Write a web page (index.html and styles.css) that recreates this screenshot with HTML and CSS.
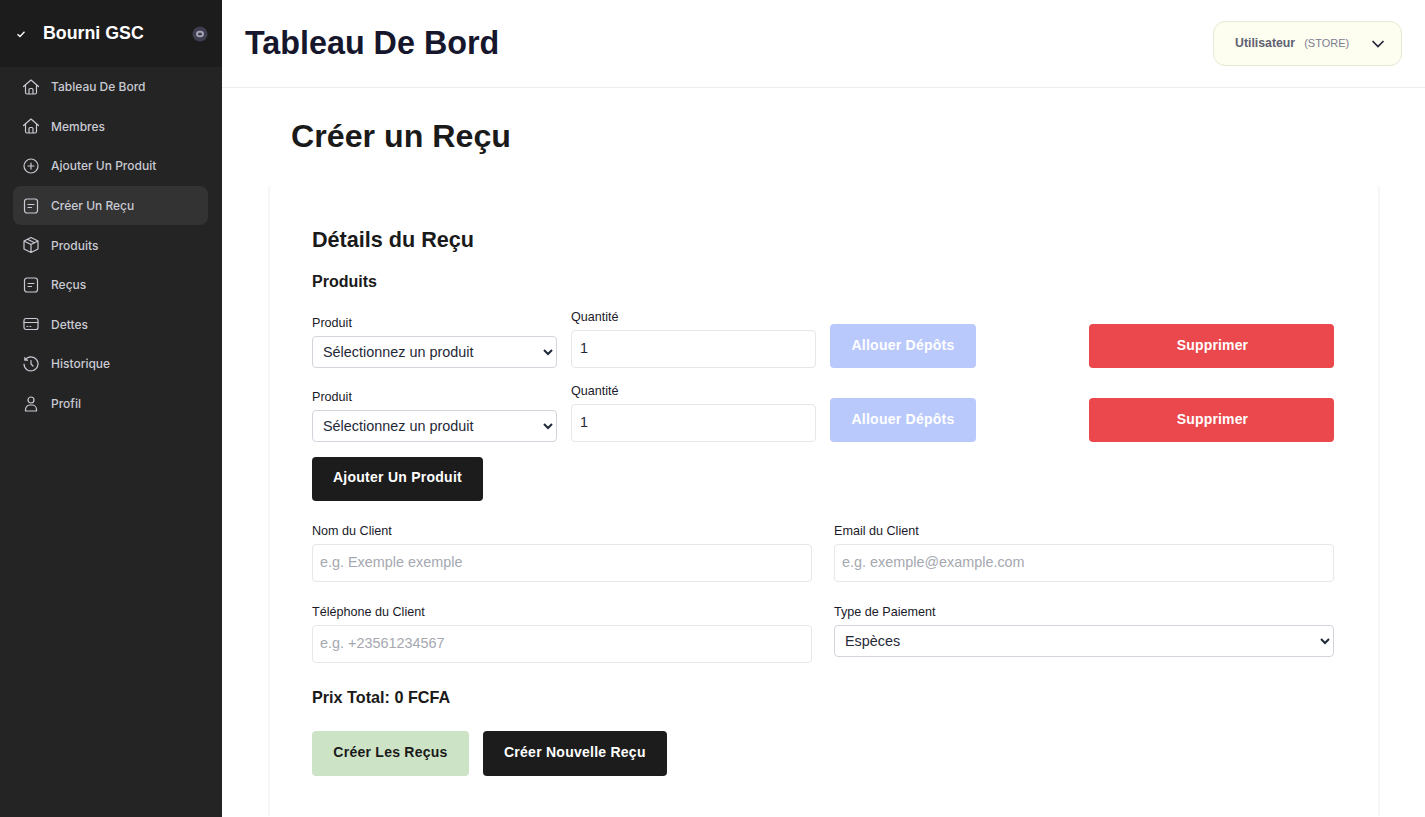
FILE: index.html
```html
<!DOCTYPE html>
<html lang="fr">
<head>
<meta charset="utf-8">
<title>Tableau De Bord</title>
<link rel="stylesheet" href="styles.css">
</head>
<body>
<div class="app">
  <aside class="sidebar">
    <div class="brand">
      <svg class="brand-check" viewBox="0 0 10 10"><path d="M1.500 5.200 4 7.500 8.500 2.800"/></svg>
      <span class="brand-name">Bourni GSC</span>
      <svg class="brand-eye" viewBox="0 0 16 16"><circle class="eye-bg" cx="8" cy="8" r="7.500"/><ellipse class="eye-ring" cx="8" cy="8" rx="3" ry="2.400"/></svg>
    </div>
    <nav class="nav">
      <a class="nav-item"><svg class="ico" viewBox="0 0 18 18"><path d="M1.500 8.500 9 2l7.500 6.500M3.500 7v7.500a1.500 1.500 0 0 0 1.500 1.500h8a1.500 1.500 0 0 0 1.500-1.500V7M7 16v-4.500a1 1 0 0 1 1-1h2a1 1 0 0 1 1 1V16"/></svg><span>Tableau De Bord</span></a>
      <a class="nav-item"><svg class="ico" viewBox="0 0 18 18"><path d="M1.500 8.500 9 2l7.500 6.500M3.500 7v7.500a1.500 1.500 0 0 0 1.500 1.500h8a1.500 1.500 0 0 0 1.500-1.500V7M7 16v-4.500a1 1 0 0 1 1-1h2a1 1 0 0 1 1 1V16"/></svg><span>Membres</span></a>
      <a class="nav-item"><svg class="ico" viewBox="0 0 18 18"><circle cx="9" cy="9" r="7"/><path d="M9 6v6M6 9h6"/></svg><span>Ajouter Un Produit</span></a>
      <a class="nav-item active"><svg class="ico" viewBox="0 0 18 18"><rect x="2.500" y="2" width="13" height="14" rx="2.500"/><path d="M6 7.500h6M6 10.500h3.500"/></svg><span>Créer Un Reçu</span></a>
      <a class="nav-item"><svg class="ico" viewBox="0 0 18 18"><path d="M9 1.500 2 5v8l7 3.500 7-3.500V5zM2 5l7 3.500L16 5M9 8.500v8M5.500 3.200l7 3.600"/></svg><span>Produits</span></a>
      <a class="nav-item"><svg class="ico" viewBox="0 0 18 18"><rect x="2.500" y="2" width="13" height="14" rx="2.500"/><path d="M6 7.500h6M6 10.500h3.500"/></svg><span>Reçus</span></a>
      <a class="nav-item"><svg class="ico" viewBox="0 0 18 18"><rect x="2" y="3.500" width="14" height="11" rx="2"/><path d="M2 7.500h14M5 11.500h.8M8 11.500h.8"/></svg><span>Dettes</span></a>
      <a class="nav-item"><svg class="ico" viewBox="0 0 18 18"><path d="M3.200 5A7 7 0 1 1 2 9M2.800 2.500V5.200h2.700M9 5.500V9l2 2"/></svg><span>Historique</span></a>
      <a class="nav-item"><svg class="ico" viewBox="0 0 18 18"><circle cx="9" cy="5" r="3"/><path d="M3.500 16v-1.500a4.500 4.500 0 0 1 4.500-4.500h2a4.500 4.500 0 0 1 4.500 4.500V16z"/></svg><span>Profil</span></a>
    </nav>
  </aside>
  <div class="main">
    <header class="topbar">
      <h1 class="page-title">Tableau De Bord</h1>
      <div class="user-chip">
        <span class="user-name">Utilisateur</span>
        <span class="user-role">(STORE)</span>
        <svg class="chev" viewBox="0 0 14 8"><path d="M1.500 1 7 6.500 12.500 1"/></svg>
      </div>
    </header>
    <main class="content">
      <h2 class="heading">Créer un Reçu</h2>
      <section class="card">
        <h3 class="card-title">Détails du Reçu</h3>
        <h4 class="sub-title">Produits</h4>
        <div class="line">
          <div class="field"><label class="label">Produit</label><select class="select"><option>Sélectionnez un produit</option></select></div>
          <div class="field"><label class="label">Quantité</label><input class="input qty" value="1"></div>
          <div class="field"><button class="btn btn-blue">Allouer Dépôts</button></div>
          <div class="field"><button class="btn btn-red">Supprimer</button></div>
        </div>
        <div class="line">
          <div class="field"><label class="label">Produit</label><select class="select"><option>Sélectionnez un produit</option></select></div>
          <div class="field"><label class="label">Quantité</label><input class="input qty" value="1"></div>
          <div class="field"><button class="btn btn-blue">Allouer Dépôts</button></div>
          <div class="field"><button class="btn btn-red">Supprimer</button></div>
        </div>
        <button class="btn btn-dark btn-add">Ajouter Un Produit</button>
        <div class="client-grid">
          <div class="field"><label class="label">Nom du Client</label><input class="input" placeholder="e.g. Exemple exemple"></div>
          <div class="field"><label class="label">Email du Client</label><input class="input" placeholder="e.g. exemple@example.com"></div>
          <div class="field"><label class="label">Téléphone du Client</label><input class="input" placeholder="e.g. +23561234567"></div>
          <div class="field"><label class="label">Type de Paiement</label><select class="select"><option>Espèces</option></select></div>
        </div>
        <p class="total">Prix Total: 0 FCFA</p>
        <div class="actions">
          <button class="btn btn-green">Créer Les Reçus</button>
          <button class="btn btn-dark">Créer Nouvelle Reçu</button>
        </div>
      </section>
    </main>
  </div>
</div>
</body>
</html>
```
FILE: styles.css
```css
* { box-sizing: border-box; }
html, body { margin: 0; height: 100%; overflow: hidden; }
body { font-family: "Liberation Sans", Arial, sans-serif; color: #1a1a1a; background: #fff; }
.app { display: flex; height: 817px; }

.sidebar { width: 222px; flex: none; background: #242424; }
.brand { height: 67px; background: #1c1c1c; display: flex; align-items: center; padding: 0 14px 0 16px; }
.brand-check { width: 10px; height: 10px; fill: none; stroke: #fff; stroke-width: 1.300; margin-right: 17px; }
.brand-name { flex: 1; color: #fff; font-weight: 700; font-size: 17.800px; }
.brand-eye { width: 16px; height: 16px; fill: none; }
.eye-bg { fill: #3f3d50; }
.eye-ring { stroke: #a9a9b8; stroke-width: 1.800; }
.nav { display: flex; flex-direction: column; padding: 0 14px 0 13px; }
.nav-item { display: flex; align-items: center; gap: 11px; height: 39.600px; padding-left: 9px; border-radius: 8px; color: #c9cad3; font-family: Inter, sans-serif; font-size: 12px; font-weight: 500; }
.nav-item.active { background: #333333; }
.ico { width: 18px; height: 18px; flex: none; fill: none; stroke: #c9cad3; stroke-width: 1.200; stroke-linecap: round; stroke-linejoin: round; }

.main { flex: 1; min-width: 0; }
.topbar { height: 88px; border-bottom: 1px solid #ececec; display: flex; align-items: center; justify-content: space-between; padding: 0 23px; }
.page-title { margin: 0; font-size: 32.300px; font-weight: 700; color: #16162c; }
.user-chip { width: 189px; height: 45px; display: flex; align-items: center; background: #fdfdf0; border: 1px solid #e8e8d6; border-radius: 12px; padding: 0 16px 0 21px; }
.user-name { font-size: 12.300px; font-weight: 700; color: #5f6170; margin-right: 9px; padding-bottom: 2px; }
.user-role { font-size: 11px; color: #7c7e90; flex: 1; padding-bottom: 2px; }
.chev { width: 14px; height: 8px; fill: none; stroke: #23233a; stroke-width: 1.700; }

.content { padding: 31px 47px 0 48px; }
.heading { margin: 0 0 33px 21px; font-size: 32.200px; font-weight: 700; line-height: 34px; color: #1a1a1a; }
.card { padding: 42px 44px 40px 42px; background: #fff; height: 630px; border-radius: 2px; box-shadow: -2px 0 0 0 #f6f6f6, 2px 0 0 0 #f6f6f6; }
.card-title { margin: 0 0 20px; font-size: 21.600px; line-height: 24px; font-weight: 700; }
.sub-title { margin: 0 0 18px; font-size: 16px; line-height: 20px; font-weight: 700; }
.line { display: grid; grid-template-columns: repeat(4, 1fr); gap: 14px; align-items: end; min-height: 58px; margin-bottom: 16px; }
.field { display: flex; flex-direction: column; align-items: stretch; }
.label { font-size: 12.600px; line-height: 15px; margin-bottom: 5px; color: #1a1a2a; }
.select { height: 32px; padding: 0 6px; font: 14.400px "Liberation Sans", Arial, sans-serif; color: #1f2937; background: #fff; border: 1px solid #d1d5db; border-radius: 4px; }
.input { height: 38px; padding: 0 7px 3px; font: 14.400px "Liberation Sans", Arial, sans-serif; color: #1f2937; background: #fff; border: 1px solid #e5e7eb; border-radius: 4px; }
.qty { padding-left: 8px; }
.input::placeholder { color: #a5a8b0; }
.btn { height: 44px; border: 0; border-radius: 4px; font: 700 14px "Liberation Sans", Arial, sans-serif; letter-spacing: .25px; padding: 0 21px 2px; color: #fff; }
.btn-blue { background: #b9c9fb; align-self: flex-start; width: 146px; padding: 0 0 2px; }
.btn-red { background: #ea484c; width: 100%; letter-spacing: .15px; padding-left: 23px; }
.btn-dark { background: #1c1c1c; }
.btn-green { background: #cce3c5; color: #1a1a1a; width: 157px; padding-left: 0; padding-right: 0; }
.btn-add { display: block; margin: -1px 0 23px; padding-bottom: 4px; }
.client-grid { display: grid; grid-template-columns: 1fr 1fr; column-gap: 22px; row-gap: 23px; }
.total { margin: 24px 0 0; font-size: 16.200px; line-height: 20px; font-weight: 700; }
.actions { display: flex; gap: 14px; margin-top: 24px; }
.actions .btn { height: 45px; padding-bottom: 4px; }
```
